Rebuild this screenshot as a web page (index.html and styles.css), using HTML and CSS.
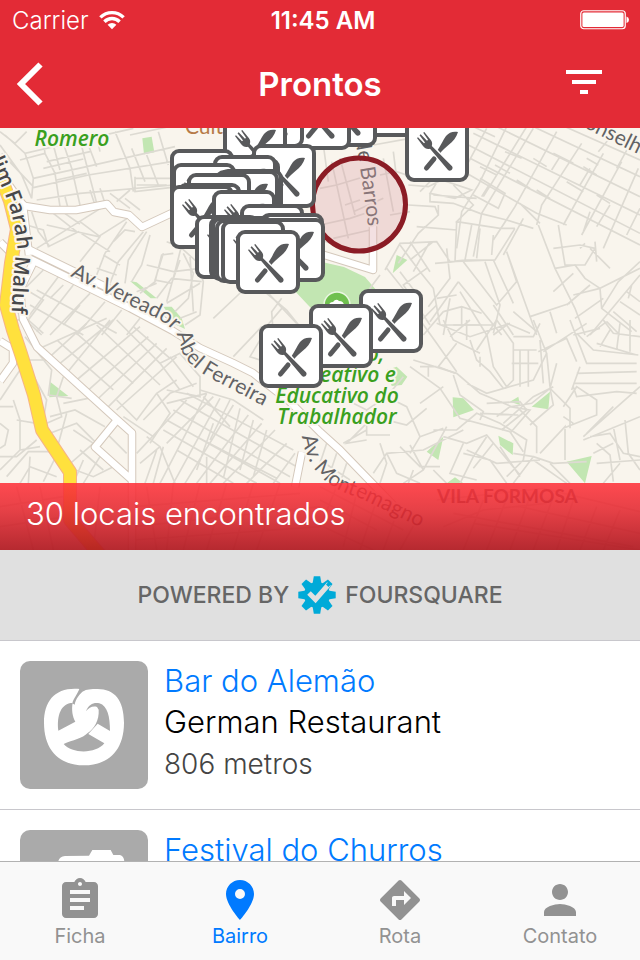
FILE: index.html
```html
<!DOCTYPE html>
<html lang="pt-BR">
<head>
<meta charset="utf-8">
<meta name="viewport" content="width=device-width, initial-scale=1">
<title>Prontos</title>
<link rel="stylesheet" href="styles.css">
</head>
<body>
<header class="top">
  <div class="status">
    <div class="status-left"><span>Carrier</span>
      <svg class="wifi" viewBox="0 0 26 20" aria-hidden="true"><g fill="none" stroke="#fff" stroke-width="3.4"><path d="M1.4 7.4a16.5 16.5 0 0 1 23.2 0"/><path d="M5.4 11.7a10.8 10.8 0 0 1 15.2 0"/></g><path fill="#fff" d="M13 19.2 8.6 14.7a6.3 6.3 0 0 1 8.8 0z"/></svg>
    </div>
    <time class="clock">11:45 AM</time>
    <svg class="battery" viewBox="0 0 50 20" aria-hidden="true"><rect x=".75" y=".75" width="44.5" height="18" rx="3" fill="none" stroke="#fff" stroke-width="1.2"/><rect x="2.4" y="2.4" width="41.2" height="14.7" rx="1.5" fill="#fff"/><path fill="#fff" d="M46.5 6.5q2.5.8 2.5 3.3t-2.5 3.3z"/></svg>
  </div>
  <nav class="nav">
    <button class="nav-button" aria-label="Voltar"><svg viewBox="0 0 28 44" width="28" height="44"><path d="M24.500 2.500 5 22l19.500 19.500" fill="none" stroke="#fff" stroke-width="6"/></svg></button>
    <h1 class="title">Prontos</h1>
    <button class="nav-button nav-right" aria-label="Filtrar"><svg viewBox="0 0 36 24" width="36" height="24"><path fill="#fff" d="M0 0h36v4H0zM6 10h24v4H6zM14 20h8v4h-8z"/></svg></button>
  </nav>
</header>

<section class="map" aria-label="Mapa">
<svg class="map-canvas" viewBox="0 128 640 422" preserveAspectRatio="xMidYMid slice">
  <defs>
    <g id="pin">
      <rect x="2" y="2" width="60" height="60" rx="7" fill="#fff" stroke="#58595b" stroke-width="4"/>
      <path fill="#58595b" d="M53 14c-5-1-9 .5-12 4-3 4-4.500 8-6.500 11l-2.500 4 2.500 3c3-4 6-6.500 9-9 4.500-3.500 8-7.500 9.500-13z"/>
      <path stroke="#58595b" stroke-width="5" stroke-linecap="round" d="M29 41l-7.500 9"/>
      <path stroke="#fff" stroke-width="6" d="M28 31l10 11"/>
      <path fill="#58595b" d="M12 20l1-.8 6 6 1-.8-5.500-7.200 1.200-1 6.300 6.500 1-.9-4.800-7 1.100-.9 6.500 8c1.600 2 1.600 4 1 6.200l20 20c2.500 2.700-1.500 6.400-4 3.700L25 30.700c-3 .6-5.200-.3-7-2.700z"/>
    </g>
    <path id="rSalim" d="M-20 138 Q-6 170 4 192 Q14 215 17 245 Q12 280 11 340"/>
    <path id="rVer" d="M70 276 L160 320 Q178 331 180 345 Q184 364 210 378 L275 412"/>
    <path id="rMonte" d="M302 436 Q306 460 318 473 Q332 490 358 497 L430 532"/>
    <path id="rBarros" d="M355 140 Q362 175 369 235"/>
    <path id="rCons" d="M571 121 L660 165"/>
  </defs>
  <rect y="128" width="640" height="422" fill="#f9f5ed"/>

  <g fill="#c2e6b2">
    <path d="M292 288 322 262l22 5 21 10 12 14-20 20-32 12z"/>
    <g transform="translate(0 125) scale(.33333)"><path d="M427 40l28-5 8 47-31 6zM390 468l20 4 60 48h-18zM490 545h25l30 35 10 32-25-12z"/></g>
    <g transform="translate(320 125) scale(.33333)"><path d="M230 390l32 15-44 40z"/></g>
    <g transform="translate(0 320) scale(.33333)"><path d="M150 185l55 43-57 4z"/></g>
    <g transform="translate(320 320) scale(.33333)"><path d="M200 150l30-10 32 30-17 25-30 3zM398 232l32 3 32 35-62 22zM570 245l25-15 5 25zM635 260l55-45-5 53zM370 350l-15 70-35-25zM535 347l45 23-2 35-38-30zM740 425l75-17-20 82zM380 490l25-18 25 18z"/></g>
  </g>

  <g fill="none" stroke="#dddad2" stroke-width="5">
    <g transform="translate(0 125) scale(.33333)">
      <path d="M0 60l65 90 30 70M0 20l45 35 35-35M5 85l95 100M15 30l60 55L400 10M100 160l160-35 265-60M60 105l75-20-10-75M100 188L265 150l250-40M110 225l130-20 280-25M75 85l25 75-5 60M135 85l30 60 15 100M190 55l25 75 25 110M240 45l50 190M300 80l-10-45M345 20l45 110 10 70M395 70l40 100M440 90l35 90M475 20l30 100M390 30l140-30M140 110l130-30M130 130l120-28M170 165l90-20M405 160h110M410 180h90M160 60l20 75M265 60l25 65M405 155v45l105-12M330 205l60 45M350 230l40-35M375 220l45 35M270 195l15 45M300 190l15 45M195 215l8 30"/>
      <path d="M95 260l20 60 35 45M80 300l50 15 15 50 90-45 95 60M140 300l155 35 95-60M110 370l200-125M160 265l70 55M190 262l50 35M240 290l60 45-60 75M380 290l-65 95-25 65M430 320l-75 90-25 65M440 320l-55 85-10 70M450 330l-25 90-30 50M340 350l35-35 30 5M310 390l50 30M290 430l60 20M500 350l40 15 50 45 20 60-10 100-45 30M520 385l-35 5-20 80-45 35M550 385l30 60-15 75-40 40M490 385l-25 80 50 10 25-70M440 420l80 20 80-10M470 520l45-60 90 10M500 535l100-60M545 360l-20 80-25 90M570 390l10 170M410 500l60-25M540 580l50-20"/>
      <path d="M130 435l-60 60-15 70 70 65M175 455l-90 120-60 20M220 480l-110 140M270 505l-120 125M315 530l-85 100M365 555l-60 75M420 580l-40 50M110 495l240 130M90 540l160 90M150 520l40-40M190 600l50-60M80 495l50 30-45 60 45 40M640 580l90-85M770 480l90 75 60 75M850 545l-60 70M845 520l-30 40 5 70M800 500l90 95"/>
    </g>
    <g transform="translate(320 125) scale(.33333)">
      <path d="M160 60l110-20M0 190l50-10 100-30M0 300l90-20 60-20M40 340l110-25M35 110l50 230M60 100l45 170M75 240l45-15M100 260l90-40M180 150l50-10 30 10M190 100l30 160M10 60l15 110M0 345l120 35M210 270l60-10M220 80l10 80"/>
      <path d="M445 60l515 265M450 100l510 260M530 5l430 210M460 25l500 245M640 5l320 150M440 145l210 120 90 35M735 5l225 100M460 5l65 30M560 5l-85 175-50 80-15 110M640 10L485 265l-25 130M710 20L585 245l-65 100M785 55L665 240l-15 60M850 85L730 300M905 110L785 330M955 130L850 370M620 5l-130 210M500 10l-70 130M960 250l-40 80M885 20l-50 60M940 40l-50 90M525 120l45 25M480 125l50 25M640 100l40 25M700 85l60 30M790 125l40 25M800 100l35 20M590 165l40 25M650 195l40 25M740 170l50 30M830 210l40 25M720 95l-25 40M810 130l-30 50M870 240l-40 65M600 235l60 60M810 260l-20 60M555 80l50 20M480 160l75 45-20 45-75-40M510 175l-25 40"/>
      <path d="M265 180l60 5 40-20 90 30-50 25-75-15 25-40M330 205l0 25 70 5 80 30 80 20 80 25M265 240l80 5 10 25-60 55-60 90M340 210l130 10M300 200l30-30M355 270v-30M290 305l120 10M400 180l60 60-50 50 130 20 45 0M410 290l-5 120-60 5M455 300l-20 105M480 310l-10 90M585 310l-60 95-90 0-45 5-40-60-110 5-45 80M520 330l-5 60M380 370l10 90-65 85M240 360l60 80 40 50 20 110M270 350l60 90M340 350l-70 55M390 410l130-5 60 130M430 410l100 130 60-70-30-90M560 380l90 250M550 390l60-110M495 410l45 130-20 85M320 430l-70 50 80 120M330 350l-50 90M240 440l60 80-5 90M200 430l60 75 40 125M180 450l-30 40 50 60"/>
      <path d="M655 300l50 130 60 120 30 80M715 300l20 120 60 0 30-50-45-10-80 10M780 370l15-15M705 430l60-10 30 40 45 30 120-60M760 510l80-20 5 60 90 70M845 550l50-80 65-60M700 500l60-55M740 540l70-60M630 575l120-40M690 560l20 65M830 410l-5-60M870 430l-60-60M960 450l-150 180M920 500l40 30M900 530l60 40M880 560l70 60M860 590l40 40M840 610l-80 20M935 480l-10 40M850 520l-85 60"/>
      <path d="M415 470l-85 120M415 470l130 160M420 500l80 130M365 600h160M425 545v55M370 560l55-15 60 20M390 520l-20 110M350 520l60-10M300 590l50-50M310 630l60-70M520 540l60 90M580 560l70 60M560 600l-40 30"/>
    </g>
    <g transform="translate(0 320) scale(.33333)">
      <path d="M75 50l80 100-10 75 70 10M120 85l200-90M150 110l110-100M180 130l160-130M200 160L330 0M230 180L420 20M260 215L445 50M290 240L470 70M320 265L500 85M350 270L530 110M170 60l170 150M230 40l170 150M290 15l190 180M350 0l130 130M400 20l110 95M480 130l60-30 60 70 0 60-100-20M480 130l60 80M510 110l70 90M350 240l60 60 60-80 60-40M370 290l90 60M470 220l40 60-60 90M430 300l80-80 80-30M500 250l120-30M190 170l-20 60 15 60-45 20M150 290l75-20 90 50M80 130l60 110-10 60M90 120l70 0M190 250l100-20M170 390l30-110M150 340l80-30 60 60M60 150L0 240M40 240l20 60 0 90-60 60M0 260l40 0M50 300l60 10M0 310l25 20-10 45-15 10M60 390l60-10M0 410l50 0 60-50M20 470l65-75 75 0M60 490l30-50 80 30M90 410l-5 80M170 405l-40 80M250 420l-30 70M300 410l-50 80M320 340l60 60M220 330l60 40-80 70 80 30 60-30M240 390l70 60"/>
      <path d="M560 220l320 170M540 240l350 200M520 270l350 200M500 300l340 190M490 330l280 160M530 390l170 100M620 220L480 490M660 235L520 490M700 255L555 490M745 285L590 490M785 310L630 490M825 330L670 490M860 370L740 490M885 400L820 490M620 410l0 80M470 390l-35 100M490 380l-30 110M440 350l40 30 45 110M420 430l60-50M600 210l100 30 90 60M610 230l80 90M640 230L500 370M560 240L410 400M720 265l-50 210M760 300l-40 150M800 330l-40 140M690 240l-60 120M580 345l250 130M640 310l-50 140M780 60l-30 50 30 10M700 110L785 20"/>
    </g>
    <g transform="translate(320 320) scale(.33333)">
      <path d="M300 0l50 70 60 85M350 10l100 40 120-40M370 0l30 60 80 40M390 50l60-50M410 70l-55 70 50 20M440 0v60M400 15h85M470 90l60-90M450 60l20 60 40 35 40 50M500 40l20 100 40 60M530 0l50 70 0 110-25 25M480 110v30M580 50h60l20-40M580 90h70M575 130h80M600 90v110M625 90v110M640 0l40 100 10 100M660 60l10 130M560 10l70 30M655 95l85-40 30 70M670 95L800 10M750 0l50 130 150 0M710 130l-20 75 60 60 0 60M770 40l50 50 135 15M800 50l60-45M850 0l30 40 80 10M830 70l120 35M870 30l-30 50M900 10l-10 80M930 0v95"/>
      <path d="M270 140l90 65 60 90 150 40 40 60M250 170l-50 60 60 30 40 90 70-25M200 230l-60 40 0 75 70 0M300 250l70-50M320 265l-60 50-80-20M280 120l130 40 70 60 95 40 60-10 55-45M440 190l60 30 140-40 40-80M400 165l20 60 70 50-10 25M480 280l115 5M500 250l100-5 20 25-75 60M530 290l40-30 60 10-60 70M590 260l60 60 0 80M550 310l90-80 60-30M340 330l70 0 60-50 70 30 80 50-10 60-50 50M380 320l-70 130-60 40M430 330l-120 60-110 10-40 60M370 350l70 20 60-25 100 120M430 370l-40 90 80 20M430 400l80 20 50 70M440 390l90 40 130-10M500 350l-40 60-40 80M520 370l-60 75M540 380l60 90M580 400l60 10-60 80M640 410l60 20 100-5M690 430l60 60M640 420l100 70M660 400l75-80 0 100M690 205l10 50-70 60M730 260l40-60 60 40 0 45-100 40M760 190l190 0M760 200l10 30 120-15 60 5M780 140l-25 70M770 160l180-5M790 350L960 200M790 360l170-70M800 340l80-80M830 370l40 35 10 80M810 350l60-10 40 60 50 10M880 320l20 100M915 300l10 100 35 50M820 400l60-30M830 430l130-10M850 490l50-60M730 290l30 20M240 380l60 60 60 0M200 400l30 60 70 30M270 375l40 75M160 290l-80 80 60-10M140 330l-70 40M100 250l40 20M0 420l90 60M20 370l-20 60M50 400l-20 60M80 430l-20 60M180 370l20 60-20 60M300 350l-30 50M340 450l40 40M280 450l-15 40M300 140h50M325 140v30"/>
      <path d="M0 500l250 130M0 540l170 90M50 500l-50 120M110 520l-40 160M170 540l-50 150M230 580l-40 110M290 600l-50 90M10 620l150 70M350 540l320-35 290 70M400 580l540 100M370 620l120-50 190-20M430 690l60-150M500 690l60-155M570 690l60-160M640 690l60-160M710 690l50-150M780 690l50-130M850 690l50-120M460 610l500 80M600 560l360 80"/>
    </g>
    <g transform="translate(0 320) scale(.33333)"><path d="M0 560l190-30M0 620l200-30M50 500l50 190M120 500l40 190M400 560l500-40M400 620l560-60M300 500l-20 190M440 500l30 190M520 490l-20 200M600 490l-50 200M680 490l-60 200M760 490l-60 200M840 490l-70 200M400 660l560-40"/></g>
  </g>

  <g fill="none" stroke-linejoin="round">
    <g stroke="#d4c8bb" stroke-width="8.500">
      <path d="M20 202l5 4 25 4h26l31-6 7 8 15 3 13 12 32-15"/>
      <path d="M28 249 147 307l26 21M30 259l100 49 43 23 27 17 33 15 20 10 37 29 30 30 20 18 60 62"/>
      <path d="M0 242l17 17 6 60 14 28 76 69 19 17v123M117 420l-22 27 38 34M0 341l13 8v14L0 381M34 261 16 298M373 222v48l-52-16M302 452l-7 35M-5 165l28 40 6 50"/>
    </g>
    <g stroke="#fff" stroke-width="6.500">
      <path d="M20 202l5 4 25 4h26l31-6 7 8 15 3 13 12 32-15"/>
      <path d="M28 249 147 307l26 21M30 259l100 49 43 23 27 17 33 15 20 10 37 29 30 30 20 18 60 62"/>
      <path d="M0 242l17 17 6 60 14 28 76 69 19 17v123M117 420l-22 27 38 34M0 341l13 8v14L0 381M34 261 16 298M373 222v48l-52-16M302 452l-7 35M-5 165l28 40 6 50"/>
    </g>
    <path stroke="#f6b487" stroke-width="14" d="M-4 165l14 36 7 28-6 34-5 42 7 25 8 24 13 41 8 35 28 42v48l30 35"/>
    <path stroke="#ffe13d" stroke-width="12" d="M-4 165l14 36 7 28-6 34-5 42 7 25 8 24 13 41 8 35 28 42v48l30 35"/>
  </g>

  <g class="road-label">
    <text class="road-dark"><textPath href="#rSalim">Salim Farah Maluf</textPath></text>
    <text><textPath href="#rVer">Av. Vereador Abel Ferreira</textPath></text>
    <text><textPath href="#rMonte">Av. Montemagno</textPath></text>
    <text><textPath href="#rBarros">de Barros</textPath></text>
    <text><textPath href="#rCons">Conselheiro</textPath></text>
    <text x="437" y="503" class="district">VILA FORMOSA</text>
  </g>
  <text x="185" y="134" class="poi">Cult</text>
  <g class="park-label">
    <text x="72" y="146">Romero</text>
    <text x="337" y="361">Esportivo,</text>
    <text x="337" y="382">Recreativo e</text>
    <text x="337" y="403">Educativo do</text>
    <text x="337" y="424">Trabalhador</text>
  </g>
  <circle cx="337" cy="305" r="13" fill="#70c050" stroke="#eaf6e2" stroke-width="1.500"/>
  <path fill="#fff" d="M329 306q0-4 4-4 3-4 6-1 5 0 5 5z"/>
  <circle cx="359" cy="204.500" r="46.500" fill="#d9a0a6" fill-opacity=".32" stroke="#8b1c25" stroke-width="5"/>

  <use href="#pin" x="365" y="73"/><use href="#pin" x="405" y="118"/>
  <use href="#pin" x="313" y="83"/><use href="#pin" x="287" y="86"/>
  <use href="#pin" x="240" y="84"/><use href="#pin" x="223" y="116"/>
  <use href="#pin" x="252" y="144"/><use href="#pin" x="170" y="149"/>
  <use href="#pin" x="216" y="158"/><use href="#pin" x="213" y="155"/>
  <use href="#pin" x="172" y="163"/><use href="#pin" x="219" y="169"/>
  <use href="#pin" x="215" y="170"/><use href="#pin" x="187" y="173"/>
  <use href="#pin" x="177" y="183"/><use href="#pin" x="170" y="185"/>
  <use href="#pin" x="212" y="190"/><use href="#pin" x="240" y="204"/>
  <use href="#pin" x="195" y="215"/><use href="#pin" x="260" y="213"/>
  <use href="#pin" x="209" y="216"/><use href="#pin" x="261" y="218"/>
  <use href="#pin" x="211" y="217"/><use href="#pin" x="215" y="219"/>
  <use href="#pin" x="221" y="220"/><use href="#pin" x="236" y="230"/>
  <use href="#pin" x="359" y="289"/><use href="#pin" x="309" y="304"/>
  <use href="#pin" x="259" y="324"/>
</svg>
<p class="found">30 locais encontrados</p>
</section>

<div class="powered">
  <span>POWERED BY</span>
  <svg viewBox="-19 -19 38 38" width="38" height="38" aria-hidden="true">
    <g fill="#00aad8"><circle r="13"/>
      <g id="teeth"><path d="M-4.500-11l1.300-7.700h6.400l1.300 7.700v22l-1.300 7.700h-6.400l-1.300-7.700z"/><path transform="rotate(90)" d="M-4.500-11l1.300-7.700h6.400l1.300 7.700v22l-1.300 7.700h-6.400l-1.300-7.700z"/></g>
      <use href="#teeth" transform="rotate(45)"/></g>
    <path d="M-8-2-1.500 4.500 12-11" fill="none" stroke="#e0e0e0" stroke-width="5"/>
    <path d="M9-10.500 11.500-13l2.500 2.500L11.500-8z" fill="#00aad8"/>
  </svg>
  <span>FOURSQUARE</span>
</div>

<main class="list">
  <article class="row">
    <div class="thumb"><svg viewBox="-48 -57 384 384"><path fill="#fff" d="M132 27C60 20 24 60 24 128c0 87 51 128 120 128s120-41 120-128c0-68-29-101-79-101-20 0-35 1-43 7z"/><path fill="#aaa" d="M131 24l12 8c-12 10-24 24-27 42l-7-4c3-14 16-28 22-46zM67 152c-5-47 8-82 43-84-4 22 0 42 8 57zM150 94c8-22 25-28 40-24 25 8 32 40 32 83l-37-22-28 31 48 28c-25 32-97 32-122 2 27-12 57-17 72-33 20-14 35-38 33-70l-5-8c-14-4-24 3-33 13z"/></svg></div>
    <div class="info"><h2><a href="#">Bar do Alemão</a></h2><p class="kind">German Restaurant</p><p class="distance">806 metros</p></div>
  </article>
  <article class="row">
    <div class="thumb"><svg viewBox="60 555 384 384"><path fill="#fff" d="M175 660v-12q4-14 20-15l72-1 10-17h55l8 15h20q12 4 13 20v10l-25 190H200z"/></svg></div>
    <div class="info"><h2><a href="#">Festival do Churros</a></h2></div>
  </article>
</main>

<nav class="tabs">
  <a class="tab" href="#"><svg viewBox="0 0 24 24"><path d="M19 3h-4.180C14.400 1.840 13.300 1 12 1c-1.300 0-2.400.84-2.820 2H5c-1.100 0-2 .9-2 2v14c0 1.100.9 2 2 2h14c1.100 0 2-.9 2-2V5c0-1.100-.9-2-2-2zm-7 0c.55 0 1 .45 1 1s-.45 1-1 1-1-.45-1-1 .45-1 1-1zm2 14H7v-2h7v2zm3-4H7v-2h10v2zm0-4H7V7h10v2z"/></svg><span>Ficha</span></a>
  <a class="tab active" href="#" aria-current="page"><svg viewBox="0 0 24 24"><path d="M12 2C8.130 2 5 5.130 5 9c0 5.250 7 13 7 13s7-7.750 7-13c0-3.870-3.130-7-7-7zm0 9.500a2.500 2.500 0 0 1 0-5 2.500 2.500 0 0 1 0 5z"/></svg><span>Bairro</span></a>
  <a class="tab" href="#"><svg viewBox="0 0 24 24"><path d="M21.710 11.290l-9-9c-.39-.39-1.020-.39-1.410 0l-9 9c-.39.39-.39 1.020 0 1.410l9 9c.39.39 1.020.39 1.410 0l9-9c.39-.38.39-1.010 0-1.410zM14 14.500V12h-4v3H8v-4c0-.55.45-1 1-1h5V7.500l3.500 3.500-3.500 3.500z"/></svg><span>Rota</span></a>
  <a class="tab" href="#"><svg viewBox="0 0 24 24"><path d="M12 12c2.210 0 4-1.790 4-4s-1.790-4-4-4-4 1.790-4 4 1.790 4 4 4zm0 2c-2.670 0-8 1.340-8 4v2h16v-2c0-2.660-5.330-4-8-4z"/></svg><span>Contato</span></a>
</nav>
</body>
</html>
```
FILE: styles.css
```css
* { box-sizing: border-box; }
body {
  margin: 0;
  height: 100vh;
  display: flex;
  flex-direction: column;
  overflow: hidden;
  background: #fff;
  font-family: Inter, "Liberation Sans", sans-serif;
}
h1, h2, p { margin: 0; font-weight: inherit; }
a { color: inherit; text-decoration: none; }
svg { display: block; }

.top { flex: none; background: #e32b36; color: #fff; }
.status {
  display: grid;
  grid-template-columns: 1fr auto 1fr;
  align-items: center;
  height: 40px;
  padding: 0 10px 0 12px;
  font-size: 24px;
}
.status-left { display: flex; align-items: center; gap: 10px; font-weight: 300; }
.wifi { width: 26px; height: 20px; }
.clock { font-weight: 600; padding-left: 4px; }
.battery { width: 50px; height: 20px; justify-self: end; }
.nav {
  display: grid;
  grid-template-columns: 1fr auto 1fr;
  align-items: center;
  height: 88px;
  padding: 0 38px 0 16px;
}
.nav-button { padding: 0; border: 0; background: none; justify-self: start; }
.nav-right { justify-self: end; margin-bottom: 4px; }
.title { font-size: 33px; font-weight: 600; padding-left: 22px; }

.map { position: relative; flex: none; aspect-ratio: 640 / 422; }
.map-canvas { width: 100%; height: 100%; }
.road-label, .park-label, .poi { font-family: Lato, "Open Sans", sans-serif; paint-order: stroke; stroke: #f9f5ed; stroke-width: 4px; stroke-linejoin: round; }
.road-label { fill: #626264; font-size: 21px; }
.road-dark { fill: #48484a; font-family: "Open Sans", sans-serif; font-weight: 600; font-size: 21px; }
.district { font-weight: 700; font-size: 19px; stroke-width: 0; }
.poi { fill: #b67b48; font-size: 21px; }
.park-label { fill: #3aa01e; font-family: "Open Sans", sans-serif; font-size: 21px; font-style: italic; font-weight: 600; text-anchor: middle; }
.found {
  position: absolute;
  inset: auto 0 0 0;
  padding: 11px 26px 16px;
  font-size: 31px;
  line-height: 40px;
  font-weight: 300;
  color: #fff;
  background: linear-gradient(rgba(255, 50, 58, .88), rgba(228, 40, 48, .88) 40%, rgba(176, 24, 32, .92));
}

.powered {
  flex: none;
  display: flex;
  align-items: center;
  justify-content: center;
  gap: 9px;
  height: 91px;
  border-bottom: 1px solid #c8c7cc;
  background: #e0e0e0;
  color: #666;
  font-size: 23px;
  font-weight: 500;
}

.list { flex: 1; min-height: 0; overflow: hidden; }
.row {
  display: flex;
  gap: 16px;
  padding: 20px;
  border-bottom: 1px solid #c8c7cc;
}
.thumb { flex: none; width: 128px; height: 128px; border-radius: 10px; background: #aaa; overflow: hidden; }
.info { min-width: 0; font-size: 31px; line-height: 42px; font-weight: 300; white-space: nowrap; }
.info h2 { font-size: 31px; line-height: 40px; color: #007aff; }
.kind { color: #000; }
.distance { font-size: 28px; color: #444; }

.tabs {
  flex: none;
  display: grid;
  grid-template-columns: repeat(4, 1fr);
  height: 99px;
  padding-top: 14px;
  border-top: 1px solid #b2b2b2;
  background: #f9f9f9;
}
.tab { display: flex; flex-direction: column; align-items: center; color: #929292; font-size: 20px; line-height: 24px; }
.tab svg { width: 48px; height: 48px; fill: currentColor; }
.active { color: #007aff; }
```
